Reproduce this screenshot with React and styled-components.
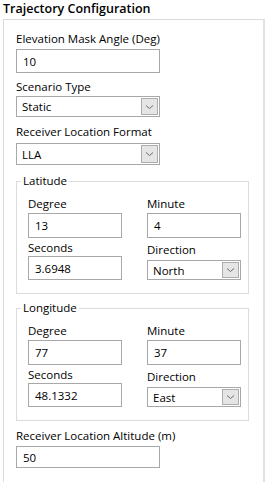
import React from "react";
import styled, { createGlobalStyle } from "styled-components";

const GlobalStyle = createGlobalStyle`
  body {
    margin: 0;
    background: #ffffff;
    font-family: "Segoe UI", "Open Sans", sans-serif;
    color: #000000;
  }
`;

const Page = styled.div`
  width: 268px;
  height: 482px;
  overflow: hidden;
  background: #ffffff;
`;

const Title = styled.div`
  height: 19px;
  padding-left: 3px;
  font-size: 12.5px;
  font-weight: 600;
  line-height: 17px;
  white-space: nowrap;
`;

const Panel = styled.div`
  margin-left: 3px;
  width: 262px;
  height: 480px;
  border: 1px solid #dadada;
  border-right: 2px solid #e2e2e2;
  padding: 11px 0 0 12px;
  box-sizing: border-box;
  display: flex;
  flex-direction: column;
`;

const Field = styled.div`
  display: flex;
  flex-direction: column;
  margin-top: ${(p) => p.$top || 0}px;
`;

const Label = styled.div`
  font-size: 11.5px;
  line-height: 16px;
  height: 16px;
  margin-bottom: ${(p) => p.$gap ?? 2}px;
  white-space: nowrap;
`;

const Input = styled.div`
  width: ${(p) => p.$w || 144}px;
  height: ${(p) => p.$h || 24}px;
  box-sizing: border-box;
  border: 1px solid #a8a8a8;
  background: #ffffff;
  padding-left: 6px;
  font-size: 11.5px;
  display: flex;
  align-items: center;
`;

const Select = styled.div`
  width: ${(p) => p.$w || 144}px;
  height: ${(p) => p.$h || 21}px;
  box-sizing: border-box;
  border: 1px solid #a8a8a8;
  background: #ffffff;
  padding: 1px 1px 1px 5px;
  font-size: 11.5px;
  display: flex;
  align-items: center;
  justify-content: space-between;
`;

const DropButton = styled.div`
  width: 17px;
  height: 100%;
  box-sizing: border-box;
  border: 1px solid #adadad;
  background: #e5e5e5;
  display: flex;
  align-items: center;
  justify-content: center;
`;

const Group = styled.fieldset`
  width: 233px;
  box-sizing: border-box;
  margin: ${(p) => p.$top || 0}px 0 0 0;
  padding: 0;
  border: 1px solid #dcdcdc;
  min-width: 0;
`;

const Legend = styled.legend`
  margin-left: 4px;
  padding: 0 2px;
  font-size: 11.5px;
  line-height: 14px;
`;

const GroupGrid = styled.div`
  display: grid;
  grid-template-columns: 94px 94px;
  column-gap: 25px;
  row-gap: 1px;
  padding: 8px 0 13px 11px;
  align-items: start;
`;

const Chevron = () => (
  <svg width="9" height="6" viewBox="0 0 9 6">
    <path d="M1 1.5 L4.5 4.5 L8 1.5" fill="none" stroke="#6d6d6d" strokeWidth="1" />
  </svg>
);

const Dropdown = ({ value, w, h }) => (
  <Select $w={w} $h={h}>
    <span>{value}</span>
    <DropButton>
      <Chevron />
    </DropButton>
  </Select>
);

const Coordinate = ({ title, degree, minute, seconds, direction, top }) => (
  <Group $top={top}>
    <Legend>{title}</Legend>
    <GroupGrid>
      <Field>
        <Label $gap={1}>Degree</Label>
        <Input $w={94} $h={25}>{degree}</Input>
      </Field>
      <Field>
        <Label $gap={1}>Minute</Label>
        <Input $w={94} $h={25}>{minute}</Input>
      </Field>
      <Field $top={1}>
        <Label $gap={0}>Seconds</Label>
        <Input $w={94} $h={24}>{seconds}</Input>
      </Field>
      <Field $top={3}>
        <Label $gap={2}>Direction</Label>
        <Dropdown value={direction} w={94} h={20} />
      </Field>
    </GroupGrid>
  </Group>
);

const App = () => {
  return (
    <Page>
      <GlobalStyle />
      <Title>Trajectory Configuration</Title>
      <Panel>
        <Field>
          <Label>Elevation Mask Angle (Deg)</Label>
          <Input>10</Input>
        </Field>
        <Field $top={6}>
          <Label $gap={1}>Scenario Type</Label>
          <Dropdown value="Static" />
        </Field>
        <Field $top={7}>
          <Label $gap={3}>Receiver Location Format</Label>
          <Dropdown value="LLA" h={22} />
        </Field>
        <Coordinate
          top={9}
          title="Latitude"
          degree="13"
          minute="4"
          seconds="3.6948"
          direction="North"
        />
        <Coordinate
          top={7}
          title="Longitude"
          degree="77"
          minute="37"
          seconds="48.1332"
          direction="East"
        />
        <Field $top={7}>
          <Label $gap={2}>Receiver Location Altitude (m)</Label>
          <Input $h={22}>50</Input>
        </Field>
      </Panel>
    </Page>
  );
};

export default App;
